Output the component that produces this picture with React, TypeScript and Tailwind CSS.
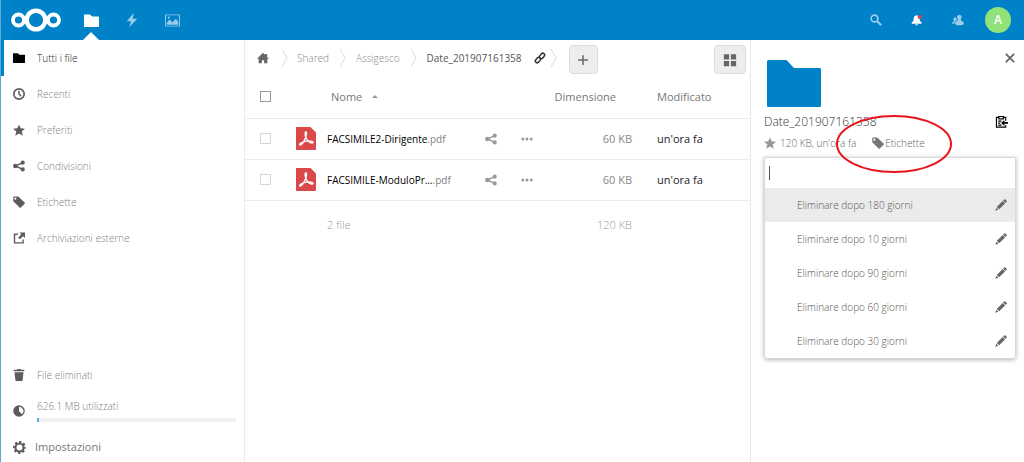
import { useState, type ReactNode } from "react";

type IconProps = { className?: string };

const Svg = ({ className = "size-3", children }: { className?: string; children: ReactNode }) => (
  <svg viewBox="0 0 16 16" className={`shrink-0 ${className}`} fill="currentColor" aria-hidden="true">
    {children}
  </svg>
);

const FolderIcon = ({ className }: IconProps) => (
  <Svg className={className}>
    <path d="M.5 1.5h6l2 2.3h7a.5.5 0 0 1 .5.5v10a.5.5 0 0 1-.5.5H.5a.5.5 0 0 1-.5-.5V2a.5.5 0 0 1 .5-.5z" />
  </Svg>
);

const LargeFolder = () => (
  <svg viewBox="0 0 54 47" className="mt-5 ml-[3px] h-[47px] w-[54px] fill-[#0082c9]" aria-hidden="true">
    <path d="M1.500 0h18l7.500 8h25.500A1.500 1.500 0 0 1 54 9.500v36a1.500 1.500 0 0 1-1.500 1.500h-51A1.500 1.500 0 0 1 0 45.500v-44A1.500 1.500 0 0 1 1.500 0z" />
  </svg>
);

const BoltIcon = ({ className }: IconProps) => (
  <Svg className={className}>
    <path d="M10 0 2 9.500h4.800L5 16l9-9.500H8.800z" />
  </Svg>
);

const PictureIcon = ({ className }: IconProps) => (
  <Svg className={className}>
    <path
      fillRule="evenodd"
      d="M.5 1.500h15a.5.5 0 0 1 .5.5v12a.5.5 0 0 1-.5.5H.5A.5.5 0 0 1 0 14V2a.5.5 0 0 1 .5-.5zM1 2.500v11h14v-11z"
    />
    <path d="M2 12.500V10l3-3 3 3 3.500-4L14 9v3.500z" />
    <circle cx="4" cy="4.800" r="1.200" />
  </Svg>
);

const ClockIcon = ({ className }: IconProps) => (
  <Svg className={className}>
    <circle cx="8" cy="8" r="6.900" fill="none" stroke="currentColor" strokeWidth="2.200" />
    <path d="M8 3.500V8l3 3" fill="none" stroke="currentColor" strokeWidth="2" />
  </Svg>
);

const StarIcon = ({ className }: IconProps) => (
  <Svg className={className}>
    <path d="M8 .5 10.200 5.800 16 6.300l-4.400 3.800L13 15.700l-5-3-5 3 1.400-5.600L0 6.300l5.800-.5z" />
  </Svg>
);

const ShareIcon = ({ className }: IconProps) => (
  <Svg className={className}>
    <path d="M13 3.500 3 8l10 4.500" fill="none" stroke="currentColor" strokeWidth="2" />
    <circle cx="13" cy="3.500" r="2.700" />
    <circle cx="3" cy="8" r="2.900" />
    <circle cx="13" cy="12.500" r="2.700" />
  </Svg>
);

const TagIcon = ({ className }: IconProps) => (
  <Svg className={className}>
    <path
      fillRule="evenodd"
      d="M.3 1.600v4.600c0 .4.100.7.400 1l8 8c.5.500 1.300.5 1.800 0l5-4.800c.5-.5.5-1.300 0-1.800L7.400 1c-.3-.3-.6-.4-1-.4H1.300c-.6 0-1 .4-1 1zm2.800.5a1.400 1.400 0 1 1 0 2.800 1.400 1.400 0 0 1 0-2.800z"
    />
  </Svg>
);

const ExternalIcon = ({ className }: IconProps) => (
  <Svg className={className}>
    <path d="M6.500 3H2v11.500h11.500V10" fill="none" stroke="currentColor" strokeWidth="1.900" />
    <path d="M8.500.5H16V8l-2.500-2.500-4.300 4.300-2.300-2.300L11.100 3z" />
  </Svg>
);

const TrashIcon = ({ className }: IconProps) => (
  <Svg className={className}>
    <path d="M6 0h4l1 1h4v2H1V1h4zM2 4.200h12L12.800 15a1 1 0 0 1-1 1H4.200a1 1 0 0 1-1-1z" />
  </Svg>
);

const QuotaIcon = ({ className }: IconProps) => (
  <Svg className={className}>
    <path
      fillRule="evenodd"
      d="M8 .3a7.700 7.700 0 1 1 0 15.400A7.700 7.700 0 0 1 8 .3zm0 2V8l3.900 4.300A5.700 5.700 0 0 0 8 2.300z"
    />
  </Svg>
);

const GearIcon = ({ className }: IconProps) => (
  <Svg className={className}>
    <circle cx="8" cy="8" r="5" fill="none" stroke="currentColor" strokeWidth="2.600" />
    <circle
      cx="8"
      cy="8"
      r="6.800"
      fill="none"
      stroke="currentColor"
      strokeWidth="2.400"
      strokeDasharray="2.900 2.440"
      strokeDashoffset="1.450"
    />
  </Svg>
);

const HomeIcon = ({ className }: IconProps) => (
  <Svg className={className}>
    <path d="M8 1 0 9h2.200v6h4.300v-4h3v4h4.300V9H16l-2.500-2.500V2.500H11V4z" />
  </Svg>
);

const LinkIcon = ({ className }: IconProps) => (
  <Svg className={className}>
    <g fill="none" stroke="currentColor" strokeWidth="2">
      <rect x="-4" y="-2.500" width="8" height="5" rx="2.500" transform="translate(10.700 5.300) rotate(-50)" />
      <rect x="-4" y="-2.500" width="8" height="5" rx="2.500" transform="translate(5.300 10.700) rotate(-50)" />
    </g>
  </Svg>
);

const GridIcon = ({ className }: IconProps) => (
  <Svg className={className}>
    <path d="M1 1.500h6v6H1zM9 1.500h6v6H9zM1 9h6v6H1zM9 9h6v6H9z" />
  </Svg>
);

const PlusIcon = ({ className }: IconProps) => (
  <Svg className={className}>
    <path d="M7 1.500h2V7h5.500v2H9v5.500H7V9H1.500V7H7z" />
  </Svg>
);

const DotsIcon = ({ className }: IconProps) => (
  <Svg className={className}>
    <circle cx="2.400" cy="8" r="2" />
    <circle cx="8" cy="8" r="2" />
    <circle cx="13.600" cy="8" r="2" />
  </Svg>
);

const SearchIcon = ({ className }: IconProps) => (
  <Svg className={className}>
    <circle cx="6" cy="6" r="4.500" fill="none" stroke="currentColor" strokeWidth="2.200" />
    <path d="m9.300 9.300 5.600 5.600" stroke="currentColor" strokeWidth="2.800" />
  </Svg>
);

const BellIcon = ({ className }: IconProps) => (
  <Svg className={className}>
    <path d="M7.500 1.500c-2.800.3-4 2.300-4 4.500 0 3-.8 4-2.500 5.300V13h13v-1.700C12.300 10 11.500 9 11.500 6c0-2.200-1.200-4.200-4-4.500zM5.800 13.700h3.400a1.700 1.700 0 0 1-3.400 0z" />
    <circle cx="11.600" cy="4" r="2.800" className="fill-[#d9434a]" />
  </Svg>
);

const ContactsIcon = ({ className }: IconProps) => (
  <Svg className={className}>
    <path d="M9.600 1C7.800 1 6.800 2.300 6.800 4c0 1.200.4 2.200 1 3v1.700c-1.700.8-3.600 1.700-3.600 3v1.600c0 .9 2.600 1.700 5.400 1.700 3 0 6-.7 6-1.700v-1.600c0-1.500-2-2.200-3.800-3V7c.6-.7 1-1.800 1-3 0-1.700-1-3-3.200-3z" />
    <path d="M4 4.700c-1.300 0-2.200.8-2.200 2.200 0 .9.300 1.400.8 2v1C1.400 10.500.3 11 .3 12v1h3v-1.300c0-1.500 1.400-2.300 2.900-3.200V6.300C6 5.300 5.200 4.700 4 4.700z" />
  </Svg>
);

const PencilIcon = ({ className }: IconProps) => (
  <Svg className={className}>
    <path d="M12.300.6a1 1 0 0 1 1.500 0l1.700 1.700a1 1 0 0 1 0 1.500l-1.500 1.500-3.200-3.200zM10.200 2.700l3.200 3.200-7.900 7.900-3.200-3.200zM1.800 11.600l2.700 2.700L.3 15.700z" />
  </Svg>
);

const CloseIcon = ({ className }: IconProps) => (
  <Svg className={className}>
    <path d="m2.500 2.500 11 11m0-11-11 11" stroke="currentColor" strokeWidth="2.400" />
  </Svg>
);

const ClipboardIcon = ({ className }: IconProps) => (
  <Svg className={className}>
    <path
      d="M5 3H1.800v12h11.400v-2.500M10 3h3.200v4M4.700 1.800h5.600v3H4.700zM4 7.500h4M4 10h2.500M4 12.500h4"
      fill="none"
      stroke="currentColor"
      strokeWidth="1.400"
    />
    <path d="M7.500 9.800 11.500 6v2.700H16v2.200h-4.500v2.700z" />
  </Svg>
);

const PdfIcon = () => (
  <svg viewBox="0 0 20 23" className="h-[23px] w-5 shrink-0" aria-hidden="true">
    <path
      d="M.8 0h13.700L20 5.500v16.700a.8.8 0 0 1-.8.8H.8a.8.8 0 0 1-.8-.8V.8A.8.8 0 0 1 .8 0z"
      className="fill-[#d9494a]"
    />
    <path
      d="M9.300 5.300c-.7 1.200 0 3.400.7 5.400.9 2.600 3.300 4.800 5.700 5.300 1.600.3 1.900-1.200.3-1.700-2.600-.8-7.300-.2-10.800 1.500-1.900 1-2 2.700-.6 2.300 2.200-.8 5.600-7.300 6-11.300.1-1.700-.6-2.600-1.300-1.500z"
      fill="none"
      stroke="#fff"
      strokeWidth="1.300"
    />
  </svg>
);

const Chevron = () => (
  <svg viewBox="0 0 7 20" className="h-5 w-[7px] shrink-0" fill="none" stroke="#dcdcdc" aria-hidden="true">
    <path d="M1 1 6 10 1 19" />
  </svg>
);

const navItems = [
  { label: "Tutti i file", icon: FolderIcon, active: true },
  { label: "Recenti", icon: ClockIcon },
  { label: "Preferiti", icon: StarIcon },
  { label: "Condivisioni", icon: ShareIcon },
  { label: "Etichette", icon: TagIcon },
  { label: "Archiviazioni esterne", icon: ExternalIcon },
];

const files = [
  { name: "FACSIMILE2-Dirigente", ext: ".pdf", size: "60 KB", modified: "un'ora fa" },
  { name: "FACSIMILE-ModuloPr…", ext: ".pdf", size: "60 KB", modified: "un'ora fa" },
];

const tags = [180, 10, 90, 60, 30].map((days) => `Eliminare dopo ${days} giorni`);

const Header = () => (
  <header className="flex h-10 shrink-0 items-center bg-[#0082c9] pr-[13px] pl-[10px]">
    <a href="#" aria-label="Nextcloud" className="shrink-0">
      <svg viewBox="0 0 50 24" className="h-6 w-[50px]" fill="none" stroke="#fff" aria-hidden="true">
        <circle cx="7.500" cy="12" r="5.500" strokeWidth="3.800" />
        <circle cx="25" cy="12" r="9.300" strokeWidth="4.400" />
        <circle cx="42.500" cy="12" r="5.500" strokeWidth="3.800" />
      </svg>
    </a>
    <nav className="ml-[10px] flex self-stretch text-white" aria-label="App">
      <a href="#" aria-label="File" className="relative flex w-10 items-center justify-center">
        <FolderIcon className="size-[15px]" />
        <span className="absolute bottom-0 border-x-8 border-b-8 border-x-transparent border-b-white" />
      </a>
      <a href="#" aria-label="Attività" className="flex w-[41px] items-center justify-center opacity-60">
        <BoltIcon className="size-[14px]" />
      </a>
      <a href="#" aria-label="Galleria" className="flex w-10 items-center justify-center opacity-60">
        <PictureIcon className="size-[15px]" />
      </a>
    </nav>
    <div className="ml-auto flex items-center text-white">
      <button type="button" aria-label="Cerca" className="flex w-[41px] justify-center opacity-60">
        <SearchIcon />
      </button>
      <button type="button" aria-label="Notifiche" className="flex w-[41px] justify-center">
        <BellIcon />
      </button>
      <button type="button" aria-label="Contatti" className="flex w-[41px] justify-center opacity-60">
        <ContactsIcon />
      </button>
      <button
        type="button"
        className="ml-[7px] flex size-[26px] items-center justify-center rounded-full bg-[#92e27a] text-xs font-semibold"
      >
        A
      </button>
    </div>
  </header>
);

const Navigation = () => (
  <nav className="flex w-[244px] shrink-0 flex-col border-r border-[#ebebeb] font-light" aria-label="File">
    <ul>
      {navItems.map(({ label, icon: Icon, active }) => (
        <li key={label}>
          <a
            href="#"
            className={
              active
                ? "flex h-9 items-center gap-3 border-l-[3px] border-[#0082c9] pl-[9px] text-[#222]"
                : "flex h-9 items-center gap-3 border-l-[3px] border-transparent pl-[9px] text-[#808080]"
            }
          >
            <Icon className={active ? "size-3 text-black" : "size-3 text-[#5c5c5c]"} />
            {label}
          </a>
        </li>
      ))}
    </ul>
    <ul className="mt-auto text-[#808080]">
      <li>
        <a href="#" className="flex h-9 items-center gap-3 pl-3">
          <TrashIcon className="size-3 text-[#5c5c5c]" />
          File eliminati
        </a>
      </li>
      <li className="flex h-9 items-center gap-3 pr-2 pl-3">
        <QuotaIcon className="size-3 text-[#5c5c5c]" />
        <div className="grow pb-0.5">
          <p>626.1 MB utilizzati</p>
          <div className="mt-1 h-1 bg-[#f0f0f0]">
            <div className="h-1 w-0.5 bg-[#5ab0d8]" />
          </div>
        </div>
      </li>
      <li>
        <button
          type="button"
          className="mt-[3px] flex h-[30px] w-full items-center gap-[9px] pl-3 text-[11px] font-normal text-[#777]"
        >
          <GearIcon className="size-[13px] text-[#5c5c5c]" />
          Impostazioni
        </button>
      </li>
    </ul>
  </nav>
);

const checkboxClass = "block size-[11px] appearance-none border bg-white checked:bg-[#0082c9]";

const FileList = () => (
  <main className="min-w-0 grow">
    <div className="flex h-9 items-center pr-1 pl-3">
      <nav className="flex items-center font-light text-[#888]" aria-label="Percorso">
        <a href="#" aria-label="Home" className="text-[#666]">
          <HomeIcon className="size-3" />
        </a>
        <span className="mr-[9px] ml-3">
          <Chevron />
        </span>
        <a href="#">Shared</a>
        <span className="mx-[10px]">
          <Chevron />
        </span>
        <a href="#">Assigesco</a>
        <span className="mx-[10px]">
          <Chevron />
        </span>
        <a href="#" className="font-normal text-[#555]">
          Date_201907161358
        </a>
        <button type="button" aria-label="Condividi" className="ml-3 text-[#333]">
          <LinkIcon className="size-3" />
        </button>
        <span className="ml-1">
          <Chevron />
        </span>
      </nav>
      <button
        type="button"
        aria-label="Nuovo"
        className="mt-[3px] ml-3 flex size-[29px] shrink-0 items-center justify-center rounded-sm border border-[#dbdbdb] bg-[#ededed] text-[#666]"
      >
        <PlusIcon className="size-3" />
      </button>
      <button
        type="button"
        aria-label="Vista griglia"
        className="mt-[3px] ml-auto flex h-[29px] w-8 shrink-0 items-center justify-center rounded-sm border border-[#dbdbdb] bg-[#ededed] text-[#666]"
      >
        <GridIcon className="size-[14px]" />
      </button>
    </div>
    <table className="w-full table-fixed border-collapse text-left text-[11px]">
      <colgroup>
        <col className="w-[51px]" />
        <col />
        <col className="w-[90px]" />
        <col className="w-[118px]" />
      </colgroup>
      <thead className="text-[#777]">
        <tr className="h-[42px] border-b border-[#ebebeb]">
          <th className="pl-[15px]">
            <input type="checkbox" aria-label="Seleziona tutto" className={`${checkboxClass} border-[#999]`} />
          </th>
          <th className="pl-[35px] font-normal" aria-sort="ascending">
            <button type="button" className="flex items-center gap-[10px]">
              Nome
              <span className="border-x-[3px] border-b-[3px] border-x-transparent border-b-[#999]" />
            </button>
          </th>
          <th className="pr-4 text-right font-normal">Dimensione</th>
          <th className="pl-[25px] font-normal">Modificato</th>
        </tr>
      </thead>
      <tbody>
        {files.map((file) => (
          <tr key={file.name} className="h-[41px] border-b border-[#ebebeb]">
            <td className="pl-[15px]">
              <input type="checkbox" aria-label={file.name} className={`${checkboxClass} border-[#d5d5d5]`} />
            </td>
            <td>
              <div className="flex items-center text-[#999]">
                <PdfIcon />
                <a href="#" className="ml-[11px] grow text-[10px] whitespace-nowrap text-black">
                  {file.name}
                  <span className="text-[#808080]">{file.ext}</span>
                </a>
                <button type="button" aria-label="Condividi" className="mr-6">
                  <ShareIcon className="size-3" />
                </button>
                <button type="button" aria-label="Azioni" className="mr-[9px]">
                  <DotsIcon className="size-3" />
                </button>
              </div>
            </td>
            <td className="text-right text-[#888]">{file.size}</td>
            <td className="pl-[25px] text-[#222]">{file.modified}</td>
          </tr>
        ))}
      </tbody>
      <tfoot className="font-light text-[#999]">
        <tr className="h-[50px]">
          <td />
          <td className="pl-[31px]">2 file</td>
          <td className="text-right">120 KB</td>
          <td />
        </tr>
      </tfoot>
    </table>
  </main>
);

const Details = () => {
  const [query, setQuery] = useState("");
  return (
    <aside className="flex w-[274px] shrink-0 flex-col border-l border-[#ebebeb] pr-2 pl-[13px]">
      <div className="flex items-start justify-between">
        <LargeFolder />
        <button type="button" aria-label="Chiudi" className="mt-3 text-[#666]">
          <CloseIcon className="size-3" />
        </button>
      </div>
      <div className="mt-[3px] flex h-[23px] items-center justify-between pr-2">
        <h2 className="text-xs font-light text-[#333]">Date_201907161358</h2>
        <button type="button" aria-label="Copia collegamento" className="text-black">
          <ClipboardIcon className="size-[13px]" />
        </button>
      </div>
      <div className="flex h-5 items-center font-light text-[#666]">
        <StarIcon className="size-3 text-[#999]" />
        <span className="ml-1">120 KB, un'ora fa</span>
        <a href="#" className="relative ml-4 flex items-center gap-px">
          <TagIcon className="size-3 text-[#777]" />
          Etichette
          <svg
            viewBox="0 0 118 60"
            className="pointer-events-none absolute top-1/2 -left-9 h-[60px] w-[118px] -translate-y-1/2"
            fill="none"
            aria-hidden="true"
          >
            <ellipse cx="58" cy="31" rx="57" ry="28" stroke="#e8141b" strokeWidth="2" />
          </svg>
        </a>
      </div>
      <div className="mt-1 rounded-b-sm border border-[#d8d8d8] shadow-[0_1px_4px_rgba(0,0,0,0.3)]">
        <div className="relative">
          <input
            type="text"
            aria-label="Etichette"
            value={query}
            onChange={(event) => setQuery(event.target.value)}
            className="peer block h-[30px] w-full px-1 outline-none"
          />
          {query === "" && (
            <span className="pointer-events-none absolute top-2 left-1 h-[14px] w-px bg-[#555] peer-focus:hidden" />
          )}
        </div>
        <ul className="font-light text-[#555]">
          {tags.map((tag, index) => (
            <li
              key={tag}
              className={
                index === 0
                  ? "flex h-[34px] items-center justify-between bg-[#ebebeb] pr-2 pl-8"
                  : "flex h-[34px] items-center justify-between pr-2 pl-8"
              }
            >
              {tag}
              <button type="button" aria-label={`Modifica ${tag}`} className="text-[#666]">
                <PencilIcon className="size-3" />
              </button>
            </li>
          ))}
        </ul>
      </div>
    </aside>
  );
};

export default function App() {
  return (
    <div className="flex min-h-screen flex-col border-l border-[#5aa9d6] bg-white font-['Open_Sans','Noto_Sans',sans-serif] text-[10px] leading-4">
      <Header />
      <div className="flex grow">
        <Navigation />
        <FileList />
        <Details />
      </div>
    </div>
  );
}
